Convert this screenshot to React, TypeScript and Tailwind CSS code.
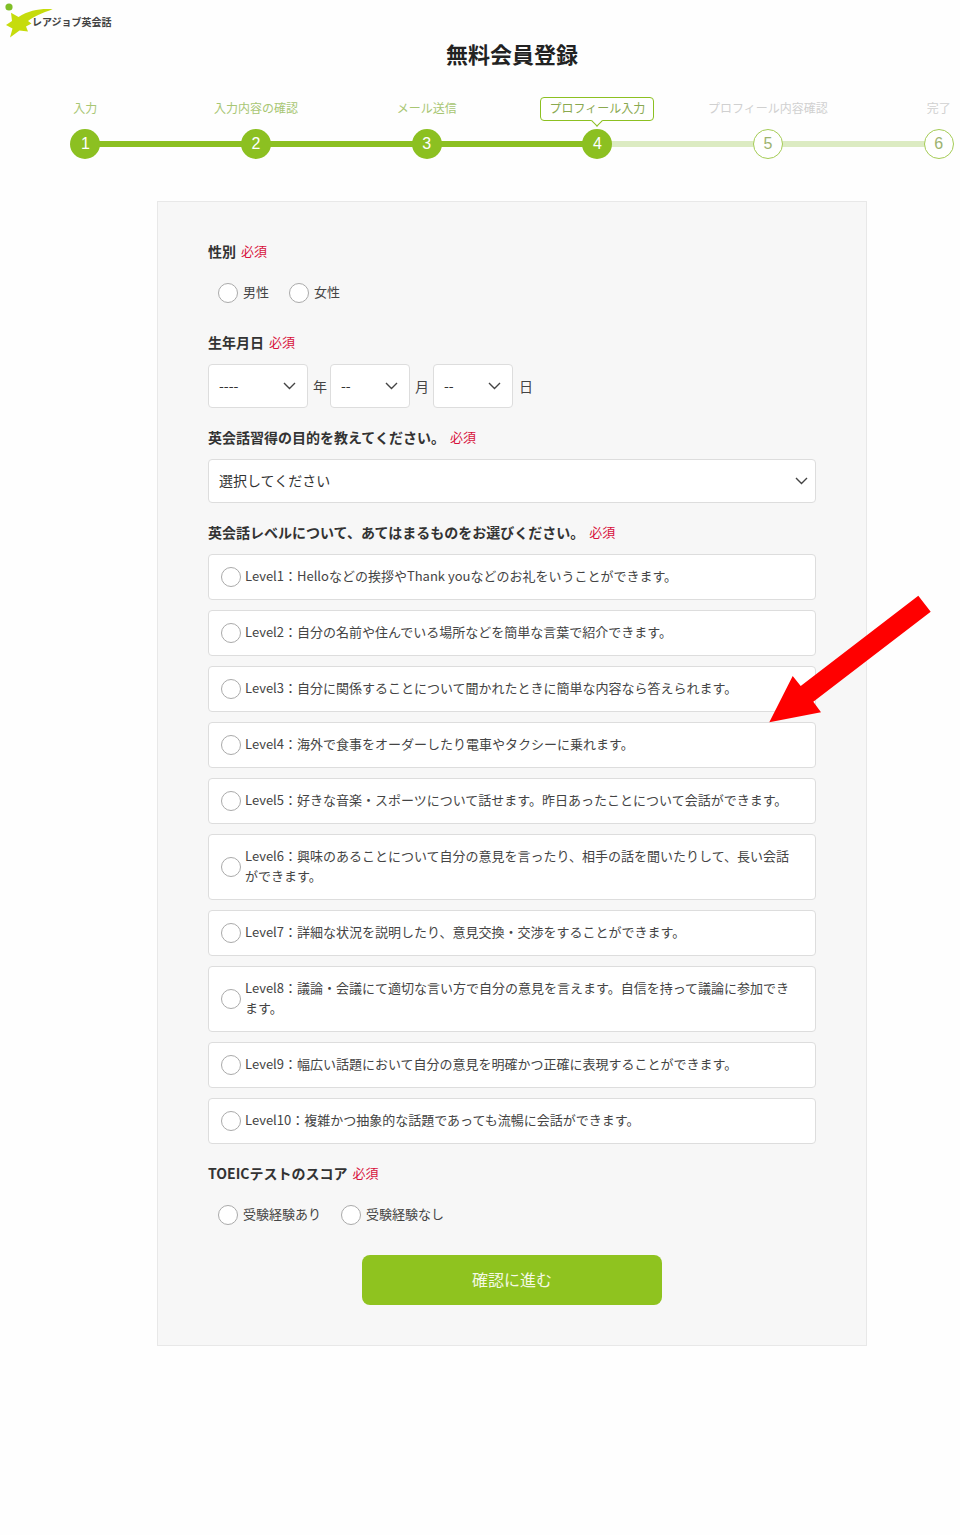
const font = "font-['Noto_Sans_CJK_JP','Noto_Sans',sans-serif]";

function Chevron() {
  return (
    <svg width="13" height="8" viewBox="0 0 13 8" fill="none" className="shrink-0">
      <path d="M1 1l5.5 5.5L12 1" stroke="#444" strokeWidth="1.4" />
    </svg>
  );
}

function Radio() {
  return <span className="block w-5 h-5 shrink-0 rounded-full border border-[#aaaaaa] bg-white" />;
}

function Req() {
  return <span className="text-[13px] leading-5 font-normal text-[#d7113c]">必須</span>;
}

function Label({ text }: { text: string }) {
  return (
    <div className="flex items-center h-5 mb-[11px] gap-[5px]">
      <span className="-mt-px mb-px text-sm leading-5 font-bold text-[#333]">{text}</span>
      <span className="-mt-px mb-px flex">
        <Req />
      </span>
    </div>
  );
}

function RadioRow({ items }: { items: string[] }) {
  return (
    <div className="flex items-center h-10 pl-2.5 gap-5">
      {items.map((t) => (
        <label key={t} className="flex items-center gap-[5px]">
          <Radio />
          <span className="-mt-px mb-px text-[13px] leading-5 text-[#444]">{t}</span>
        </label>
      ))}
    </div>
  );
}

function Select({ w, text, pr }: { w: string; text: string; pr: string }) {
  return (
    <div className={`flex items-center justify-between h-11 pl-2.5 rounded border border-[#dddddd] bg-white ${w} ${pr}`}>
      <span className="-mt-px mb-px text-sm text-[#333]">{text}</span>
      <Chevron />
    </div>
  );
}

const steps = ["入力", "入力内容の確認", "メール送信", "プロフィール入力", "プロフィール内容確認", "完了"];

function Stepper() {
  return (
    <div className="relative grid grid-cols-6 mt-[30px]">
      <div className="absolute left-[85px] top-11 h-1.5 w-[512px] bg-[#8cc021]" />
      <div className="absolute left-[597px] top-11 h-1.5 w-[341px] bg-[#dcebc2]" />
      {steps.map((s, i) => {
        const done = i < 4;
        return (
          <div key={s} className="relative flex flex-col items-center">
            <div className="h-6 flex items-center">
              {i === 3 ? (
                <span className="relative flex items-center h-6 px-2 pb-0.5 rounded border border-[#8cc021] bg-white text-xs text-[#8aa94f] whitespace-nowrap">
                  {s}
                  <span className="absolute left-1/2 -bottom-[5px] -ml-1 w-2 h-2 rotate-45 border-r border-b border-[#8cc021] bg-white" />
                </span>
              ) : (
                <span className={`-mt-0.5 text-xs whitespace-nowrap ${done ? "text-[#a8c673]" : "text-[#d0d0d0]"}`}>{s}</span>
              )}
            </div>
            <div
              className={`mt-2 w-[30px] h-[30px] rounded-full flex items-center justify-center text-base font-['Liberation_Sans',sans-serif] ${
                done ? "bg-[#8cc021] text-white" : "bg-white border border-[#a5cc55] text-[#9db36f]"
              }`}
            >
              {i + 1}
            </div>
          </div>
        );
      })}
    </div>
  );
}

const levels = [
  "Level1：Helloなどの挨拶やThank youなどのお礼をいうことができます。",
  "Level2：自分の名前や住んでいる場所などを簡単な言葉で紹介できます。",
  "Level3：自分に関係することについて聞かれたときに簡単な内容なら答えられます。",
  "Level4：海外で食事をオーダーしたり電車やタクシーに乗れます。",
  "Level5：好きな音楽・スポーツについて話せます。昨日あったことについて会話ができます。",
  "Level6：興味のあることについて自分の意見を言ったり、相手の話を聞いたりして、長い会話ができます。",
  "Level7：詳細な状況を説明したり、意見交換・交渉をすることができます。",
  "Level8：議論・会議にて適切な言い方で自分の意見を言えます。自信を持って議論に参加できます。",
  "Level9：幅広い話題において自分の意見を明確かつ正確に表現することができます。",
  "Level10：複雑かつ抽象的な話題であっても流暢に会話ができます。",
];

export default function App() {
  return (
    <div className={`relative w-[960px] h-[1535px] overflow-hidden bg-[#fefefe] ${font}`}>
      <div className="w-[1024px]">
        <header className="h-10">
          <div className="flex items-center h-10 pt-1">
            <svg width="56" height="40" viewBox="0 0 56 40" className="-mt-1 shrink-0">
              <circle cx="9" cy="7" r="3.6" fill="#7fbe26" />
              <path
                d="M52.7 9.3C42 8.3 29 10 18.5 17L11 12.7L12 21L6 25L12.5 28.5L10 37.5L19.5 30.5L28 31.5L26 26.5L31.5 23.5L28 21C33 17 42 13 52.7 9.3Z"
                fill="#c6dc0c"
              />
            </svg>
            <span className="-ml-6 text-[10px] leading-4 font-bold text-[#444] whitespace-nowrap">レアジョブ英会話</span>
          </div>
        </header>
        <h1 className="-mt-px text-center text-[22px] leading-7 font-bold text-[#222]">無料会員登録</h1>
        <Stepper />
        <main className="mx-auto mt-[42px] w-[710px] border border-[#e8e8e8] bg-[#f7f7f7] px-[50px] pt-10 pb-10">
          <section>
            <Label text="性別" />
            <RadioRow items={["男性", "女性"]} />
          </section>
          <section className="mt-5">
            <Label text="生年月日" />
            <div className="flex items-center text-sm text-[#444]">
              <Select w="w-[100px]" pr="pr-[11px]" text="----" />
              <span className="ml-[5px] mr-[3px]">年</span>
              <Select w="w-20" pr="pr-[11px]" text="--" />
              <span className="ml-[5px] mr-1">月</span>
              <Select w="w-20" pr="pr-[11px]" text="--" />
              <span className="ml-1.5">日</span>
            </div>
          </section>
          <section className="mt-5">
            <Label text="英会話習得の目的を教えてください。" />
            <Select w="w-full" pr="pr-[7px]" text="選択してください" />
          </section>
          <section className="mt-5">
            <Label text="英会話レベルについて、あてはまるものをお選びください。" />
            <div className="flex flex-col gap-2.5">
              {levels.map((l) => (
                <label key={l} className="flex items-center gap-1 py-3 pl-3 pr-6 rounded border border-[#dddddd] bg-white">
                  <Radio />
                  <span className="-mt-px mb-px text-[13px] leading-5 text-[#444]">{l}</span>
                </label>
              ))}
            </div>
          </section>
          <section className="mt-5">
            <Label text="TOEICテストのスコア" />
            <RadioRow items={["受験経験あり", "受験経験なし"]} />
          </section>
          <button className="block mx-auto mt-5 pb-0.5 w-[300px] h-[50px] rounded-lg bg-[#8fc31f] text-base text-[#f4f9e4]">確認に進む</button>
        </main>
      </div>
      <svg className="absolute left-[760px] top-[590px]" width="180" height="140" viewBox="760 590 180 140">
        <polygon points="918.3,595.7 930.7,611.7 813.3,701.7 821,712.3 769.3,722.3 792.7,676 800.7,686" fill="#ff0000" />
      </svg>
    </div>
  );
}
